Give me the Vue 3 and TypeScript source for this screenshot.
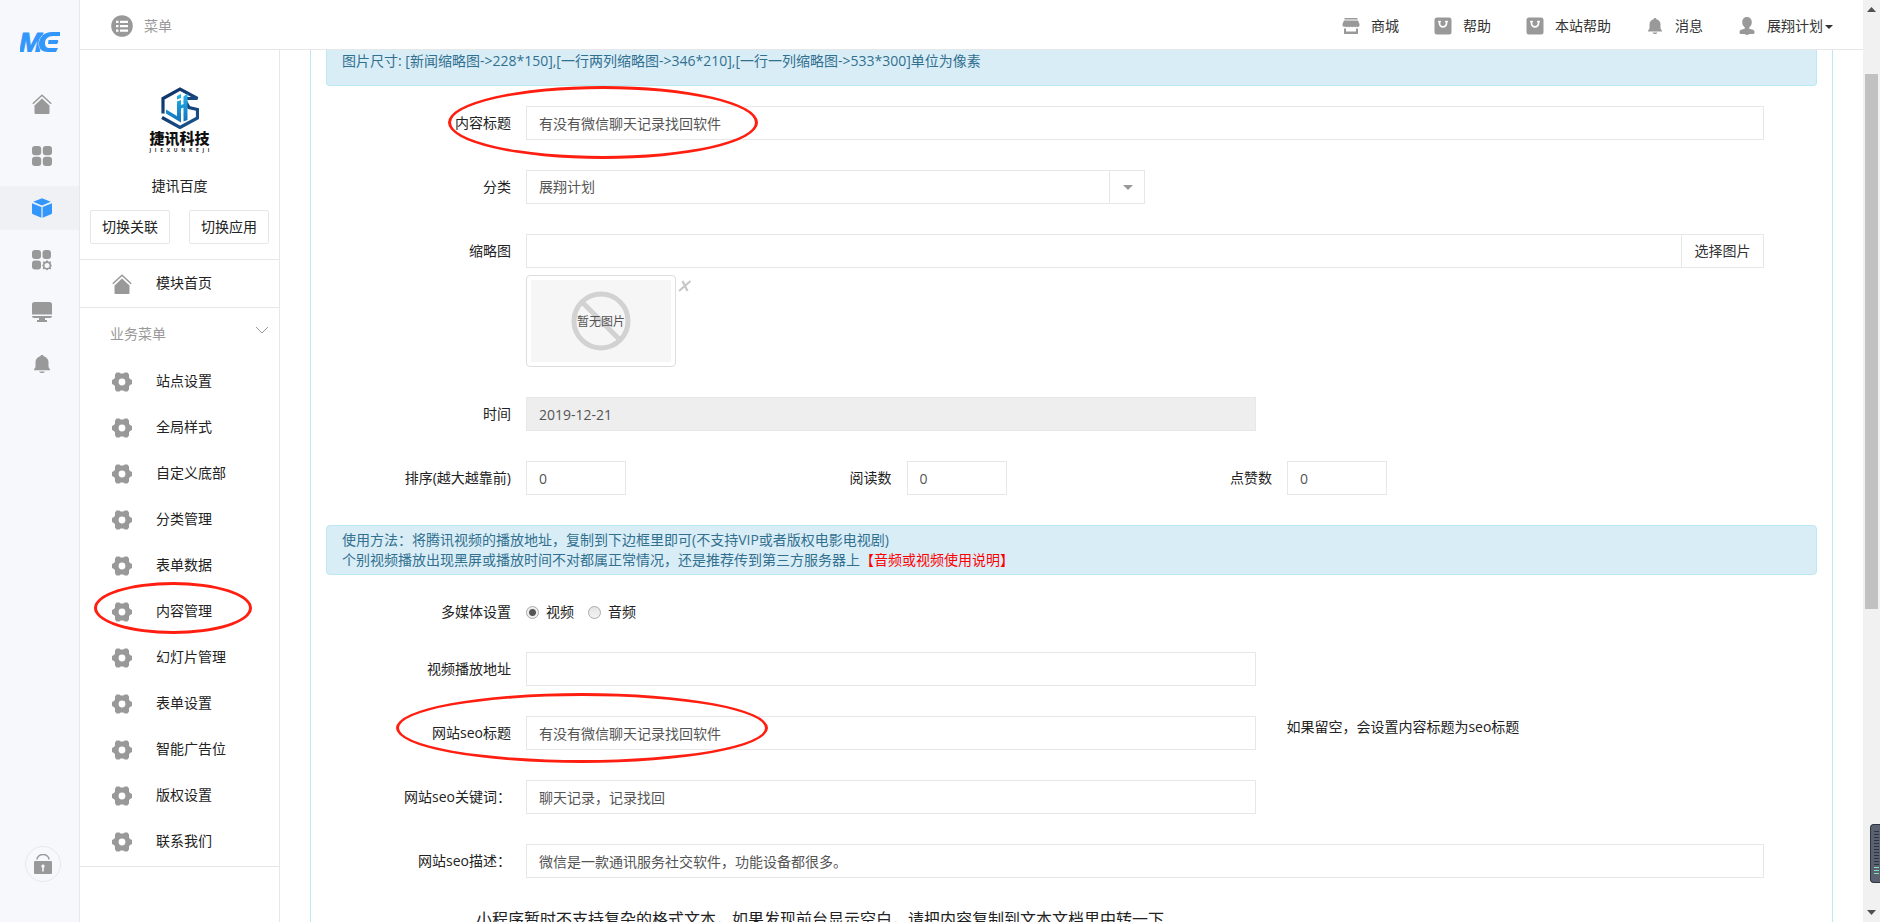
<script setup lang="ts">
import { ref } from 'vue'

interface TopLink { label: string; icon: 'shop' | 'bag' | 'bell' | 'user'; caret?: boolean }
interface MenuItem { label: string; marked?: boolean }

const railIcons = ['home', 'grid', 'cube', 'apps', 'monitor', 'bell']
const railNames: Record<string, string> = {
  home: '首页', grid: '应用', cube: '模块', apps: '管理', monitor: '系统', bell: '通知',
}
const topLinks: TopLink[] = [
  { label: '商城', icon: 'shop' },
  { label: '帮助', icon: 'bag' },
  { label: '本站帮助', icon: 'bag' },
  { label: '消息', icon: 'bell' },
  { label: '展翔计划', icon: 'user', caret: true },
]
const menu: MenuItem[] = [
  { label: '站点设置' },
  { label: '全局样式' },
  { label: '自定义底部' },
  { label: '分类管理' },
  { label: '表单数据' },
  { label: '内容管理', marked: true },
  { label: '幻灯片管理' },
  { label: '表单设置' },
  { label: '智能广告位' },
  { label: '版权设置' },
  { label: '联系我们' },
]
const brandLetters = 'JIEXUNKEJI'.split('')

const title = ref('有没有微信聊天记录找回软件')
const category = ref('展翔计划')
const thumb = ref('')
const date = ref('2019-12-21')
const order = ref('0')
const reads = ref('0')
const likes = ref('0')
const media = ref('video')
const videoUrl = ref('')
const seoTitle = ref('有没有微信聊天记录找回软件')
const seoKeys = ref('聊天记录，记录找回')
const seoDesc = ref('微信是一款通讯服务社交软件，功能设备都很多。')
</script>

<template>
  <div class="app">
    <nav class="rail">
      <svg class="mark" viewBox="0 0 40 20">
        <text x="-1" y="20" class="mark-m">M</text>
        <path class="mark-gap" d="M40 0H32C24 0 19 5 19 12c0 5 3 8 9 8h8l2-4h-8c-4 0-5-2-5-5 0-4 3-7 8-7h7z" />
        <path d="M28.500 8h9.500q1 2-1 4h-9z" />
      </svg>
      <button v-for="name in railIcons" :key="name" class="rail-btn" :class="{ active: name === 'cube' }" :aria-label="railNames[name]">
        <svg v-if="name === 'home'" viewBox="0 0 20 20"><path class="line" d="M.8 9.800 10 1.200l9.200 8.600" /><path d="M10 4.600 17.500 11.500V19a1 1 0 0 1-1 1h-13a1 1 0 0 1-1-1v-7.500z" /></svg>
        <svg v-else-if="name === 'grid'" viewBox="0 0 20 20"><rect width="9.200" height="9.200" rx="3" /><rect x="10.800" width="9.200" height="9.200" rx="3" /><rect y="10.800" width="9.200" height="9.200" rx="3" /><rect x="10.800" y="10.800" width="9.200" height="9.200" rx="3" /></svg>
        <svg v-else-if="name === 'cube'" viewBox="0 0 20 20"><path d="M10 .2 18.800 3.700 10 7.400 1.200 3.700zM0 5.200l9.400 3.900V19.800L1 16.300Q0 15.900 0 14.800zM20 5.200l-9.400 3.900V19.800l8.400-3.500q1-.4 1-1.500z" /></svg>
        <svg v-else-if="name === 'apps'" viewBox="0 0 20 20"><rect width="9" height="9" rx="3" /><rect x="10.500" width="8.500" height="9" rx="3" /><rect y="10.500" width="9" height="9" rx="3" /><path fill-rule="evenodd" d="M15 10l1.600 1.800 2.600-.2-.5 2.300 1.300 1.500-1.300 1.500.5 2.300-2.600-.2L15 20.500l-1.600-1.500-2.600.2.500-2.300L10 15.400l1.300-1.500-.5-2.300 2.600.2zM15 12.900a2.500 2.500 0 1 0 0 5 2.500 2.500 0 0 0 0-5z" /></svg>
        <svg v-else-if="name === 'monitor'" viewBox="0 0 20 20"><path d="M2.500 0h15A2.500 2.500 0 0 1 20 2.500V12.600H0V2.500A2.500 2.500 0 0 1 2.500 0zM0 14h20a2 2 0 0 1-2 2H13v2h2v2H5v-2h2v-2H2a2 2 0 0 1-2-2z" /></svg>
        <svg v-else viewBox="0 0 20 20"><path d="M10 1c.9 0 1.500.5 1.700 1.300C14.500 3 16.500 5.400 16.500 8v5L18 15.500v.8H2v-.8L3.500 13V8c0-2.600 2-5 4.800-5.700C8.500 1.500 9.100 1 10 1zM7 17.500h6q-.8 1.500-3 1.500t-3-1.500z" /></svg>
      </button>
      <button class="lock" aria-label="锁定">
        <svg viewBox="0 0 18 20"><path class="line" d="M3 5.500a6 5 0 0 1 12 0" /><path fill-rule="evenodd" d="M1 7h16a1 1 0 0 1 1 1V19a1 1 0 0 1-1 1H1a1 1 0 0 1-1-1V8a1 1 0 0 1 1-1zm8 3.500a1.700 1.700 0 0 0-.8 3.200V17.500h1.600v-3.800A1.700 1.700 0 0 0 9 10.500z" /></svg>
      </button>
    </nav>

    <div class="body">
      <header class="top">
        <button class="menu-toggle">
          <svg viewBox="0 0 22 22"><circle cx="11" cy="11" r="10.800" /><path fill="none" stroke="#fff" stroke-width="2.200" d="M5 6.800h2.500M9 6.800h8M5 11.200h2.500M9 11.200h8M5 15.600h2.500M9 15.600h8" /></svg>
          菜单
        </button>
        <ul class="top-links">
          <li v-for="link in topLinks" :key="link.label">
            <a href="#">
              <svg v-if="link.icon === 'shop'" viewBox="0 0 18 18"><path d="M2.500 1h13v1.500h-13zM2 3.500h14l1.500 3.500v1.500a2 2 0 0 1-3 1 2 2 0 0 1-2.800 0 2 2 0 0 1-2.800 0 2 2 0 0 1-2.800 0 2 2 0 0 1-2.800 0 2 2 0 0 1-2.800-1V7zM2 11.500h2v3h10v-3h2V17H2z" /></svg>
              <svg v-else-if="link.icon === 'bag'" viewBox="0 0 18 18"><rect x=".5" y=".5" width="17" height="17" rx="2.500" /><path fill="none" stroke="#fff" stroke-width="1.700" stroke-linecap="round" d="M5.500 4.800v1.500a3.500 3.500 0 0 0 7 0V4.800M4.800 4.500h1.400M11.800 4.500h1.400" /></svg>
              <svg v-else-if="link.icon === 'bell'" viewBox="0 0 18 18"><path d="M9 1c.8 0 1.300.5 1.500 1.200C13.200 2.800 14.500 5 14.500 7.500v4l1.500 2.200v.8H2v-.8l1.500-2.200v-4C3.500 5 4.800 2.800 7.500 2.200 7.700 1.500 8.200 1 9 1zM6.500 15.500h5Q11 17 9 17t-2.500-1.500z" /></svg>
              <svg v-else viewBox="0 0 18 18"><path d="M9 0c3 0 4.800 2 4.800 5 0 2.300-1 4.300-2.500 5.300v1.400l3.700 1c1 .5 1.500 1.500 1.500 2.500 0 1-.5 1.800-1.500 1.800h-3L9 18l-3-1H3c-1 0-1.500-.8-1.500-1.800 0-1 .5-2 1.500-2.500l3.700-1v-1.400C5.200 9.300 4.200 7.300 4.200 5c0-3 1.800-5 4.800-5z" /></svg>
              <span>{{ link.label }}<i v-if="link.caret" class="caret" /></span>
            </a>
          </li>
        </ul>
      </header>

      <div class="content">
        <aside class="side">
          <section class="brand">
            <svg class="hex" viewBox="0 0 38 42">
              <defs>
                <linearGradient id="hexEdge" x1="0" y1="0" x2="1" y2="1"><stop offset="0" stop-color="#0d2f62" /><stop offset="1" stop-color="#1b5590" /></linearGradient>
                <linearGradient id="hexCore" x1="0" y1="0" x2="0" y2="1"><stop offset="0" stop-color="#22b4ea" /><stop offset="1" stop-color="#1270b8" /></linearGradient>
              </defs>
              <path fill="none" stroke="url(#hexEdge)" stroke-width="3.200" d="M2 26.500V11.500L19 2l17.500 9.500H24" />
              <path fill="none" stroke="url(#hexEdge)" stroke-width="3.200" d="M24 13.500l4 7 8.500 2V31L19 40.500 1 30.500" />
              <path fill="url(#hexCore)" d="M16 14.500l4-1.500v22.500L5 26.500v-4l11 6.500zM22.500 9.500l4-3V33l-4 1.500zM16 9l4-2v4l-4 1.500zM20 18l2.500-1v3.500L20 21.500z" />
            </svg>
            <strong>捷讯科技</strong>
            <div class="latin"><span v-for="(c, i) in brandLetters" :key="i">{{ c }}</span></div>
            <p>捷讯百度</p>
            <div class="switches">
              <button>切换关联</button>
              <button>切换应用</button>
            </div>
          </section>
          <a href="#" class="item first">
            <svg viewBox="0 0 20 20"><path class="line" d="M.8 9.800 10 1.200l9.200 8.600" /><path d="M10 4.600 17.500 11.500V19a1 1 0 0 1-1 1h-13a1 1 0 0 1-1-1v-7.500z" /></svg>
            <span>模块首页</span>
          </a>
          <button class="group">
            业务菜单
            <svg viewBox="0 0 14 8"><path fill="none" stroke="#999" d="M1 1l6 6 6-6" /></svg>
          </button>
          <ul class="menu">
            <li v-for="m in menu" :key="m.label">
              <a href="#" class="item">
                <svg viewBox="0 0 20 20"><path fill-rule="evenodd" d="M4.500.5H7.500L8.500 1.500h3l1-1h3L17 2.500V5.500L18 7l2 1v4l-2 1-1 1.500v3l-1.500 2h-3l-1-1h-3l-1 1H4.500L3 17.500v-3L2 13 0 12V8l2-1 1-1.500v-3zM10 6.600a3.400 3.400 0 1 0 0 6.800 3.400 3.400 0 0 0 0-6.800z" /></svg>
                <span>{{ m.label }}</span>
              </a>
              <i v-if="m.marked" class="ring ring-menu" />
            </li>
          </ul>
        </aside>

        <main class="main">
          <form class="panel" @submit.prevent>
            <div class="alert clipped">图片尺寸: [新闻缩略图-&gt;228*150],[一行两列缩略图-&gt;346*210],[一行一列缩略图-&gt;533*300]单位为像素</div>

            <div class="row">
              <label for="title">内容标题</label>
              <div class="field"><input id="title" v-model="title" type="text"></div>
              <i class="ring ring-title" />
            </div>
            <div class="row">
              <label for="category">分类</label>
              <div class="field">
                <div class="select">
                  <select id="category" v-model="category"><option>展翔计划</option></select>
                  <i class="arrow" />
                </div>
              </div>
            </div>
            <div class="row">
              <label for="thumb">缩略图</label>
              <div class="field">
                <div class="upload">
                  <input id="thumb" v-model="thumb" type="text">
                  <button type="button">选择图片</button>
                </div>
                <div class="preview">
                  <div class="frame">
                    <svg viewBox="0 0 140 82">
                      <rect width="140" height="82" fill="#f6f6f6" />
                      <circle cx="70" cy="41" r="27" fill="none" stroke="#d2d2d2" stroke-width="5" />
                      <path d="M51 22l38 38" stroke="#d2d2d2" stroke-width="5" />
                      <text x="70" y="46" text-anchor="middle">暂无图片</text>
                    </svg>
                  </div>
                  <button type="button" class="remove" aria-label="删除"><svg viewBox="0 0 14 12"><path fill="none" stroke="#c8c8c8" stroke-width="2.200" d="M1 11 12.500 1M4.500 1l5 10" /></svg></button>
                </div>
              </div>
            </div>
            <div class="row">
              <label for="date">时间</label>
              <div class="field"><input id="date" v-model="date" class="medium" type="text" readonly></div>
            </div>
            <div class="row">
              <label for="order">排序(越大越靠前)</label>
              <div class="field">
                <div class="numbers">
                  <input id="order" v-model="order" type="text">
                  <label for="reads">阅读数</label>
                  <input id="reads" v-model="reads" type="text">
                  <label for="likes">点赞数</label>
                  <input id="likes" v-model="likes" type="text">
                </div>
              </div>
            </div>

            <div class="alert usage">
              使用方法：将腾讯视频的播放地址，复制到下边框里即可(不支持VIP或者版权电影电视剧)<br>
              个别视频播放出现黑屏或播放时间不对都属正常情况，还是推荐传到第三方服务器上<a href="#">【音频或视频使用说明】</a>
            </div>

            <div class="row radios" role="radiogroup" aria-labelledby="mediaLabel">
              <span id="mediaLabel" class="label">多媒体设置</span>
              <div class="field">
                <label class="radio"><input v-model="media" type="radio" name="media" value="video">视频</label>
                <label class="radio"><input v-model="media" type="radio" name="media" value="audio">音频</label>
              </div>
            </div>
            <div class="row">
              <label for="video">视频播放地址</label>
              <div class="field"><input id="video" v-model="videoUrl" class="medium" type="text"></div>
            </div>
            <div class="row">
              <label for="seoTitle">网站seo标题</label>
              <div class="field hinted">
                <input id="seoTitle" v-model="seoTitle" class="medium" type="text">
                <span>如果留空，会设置内容标题为seo标题</span>
              </div>
              <i class="ring ring-seo" />
            </div>
            <div class="row">
              <label for="seoKeys">网站seo关键词：</label>
              <div class="field"><input id="seoKeys" v-model="seoKeys" class="medium" type="text"></div>
            </div>
            <div class="row">
              <label for="seoDesc">网站seo描述：</label>
              <div class="field"><input id="seoDesc" v-model="seoDesc" type="text"></div>
            </div>
            <p class="note">小程序暂时不支持复杂的格式文本，如果发现前台显示空白，请把内容复制到文本文档里中转一下</p>
          </form>
        </main>
      </div>
    </div>

    <div class="scroll">
      <svg viewBox="0 0 9 5"><path d="M4.500 0 9 5H0z" /></svg>
      <div class="track"><div class="thumb" /></div>
      <svg viewBox="0 0 9 5"><path d="M0 0h9L4.500 5z" /></svg>
    </div>
    <div class="meter"><i v-for="n in 15" :key="n" :class="{ on: n > 12 }" /></div>
  </div>
</template>

<style>
body {
  margin: 0;
  overflow: hidden;
}
</style>

<style scoped>
* {
  box-sizing: border-box;
}
.app {
  position: relative;
  display: flex;
  height: 100vh;
  overflow: hidden;
  background: #fff;
  color: #222;
  font: 14px/20px "Open Sans", "Noto Sans CJK SC", sans-serif;
}
button,
input,
select {
  font: inherit;
  color: inherit;
  margin: 0;
  padding: 0;
  border: 0;
  background: none;
  border-radius: 0;
  outline: 0;
}
a {
  color: inherit;
  text-decoration: none;
}
ul,
p {
  margin: 0;
  padding: 0;
  list-style: none;
}
svg {
  display: block;
  flex: none;
  fill: #999;
}
.line {
  fill: none;
  stroke: #999;
  stroke-width: 1.5;
}

.rail {
  flex: none;
  width: 80px;
  display: flex;
  flex-direction: column;
  align-items: center;
  gap: 8px;
  padding: 32px 0 40px;
  background: #f6f8fb;
  border-right: 1px solid #e7e8ea;
}
.mark {
  width: 40px;
  height: 20px;
  margin-bottom: 22px;
  fill: #3296fa;
}
.mark-m {
  font: italic bold 28px "Liberation Sans", sans-serif;
  stroke: #3296fa;
}
.mark-gap {
  stroke: #f6f8fb;
  paint-order: stroke;
}
.rail-btn {
  align-self: stretch;
  height: 44px;
  display: flex;
  align-items: center;
  padding-left: 32px;
}
.rail-btn svg {
  width: 20px;
  height: 20px;
  overflow: visible;
}
.rail-btn.active {
  background: #eff1f5;
}
.active svg {
  fill: #3296fa;
}
.lock {
  width: 36px;
  height: 36px;
  margin: auto 0 0 6px;
  display: flex;
  align-items: center;
  justify-content: center;
  border: 1px solid #e7e8ea;
  border-radius: 50%;
}
.lock svg {
  width: 18px;
  height: 20px;
}

.body {
  flex: 1;
  min-width: 0;
  display: flex;
  flex-direction: column;
}
.top {
  flex: none;
  height: 50px;
  display: flex;
  justify-content: space-between;
  padding: 0 30px 0 31px;
  border-bottom: 1px solid #e7e7e7;
}
.menu-toggle {
  display: flex;
  align-items: center;
  gap: 11px;
  color: #999;
  padding-top: 3px;
}
.menu-toggle svg {
  width: 22px;
  height: 22px;
}
.top-links {
  display: flex;
  align-items: center;
  gap: 35px;
  padding-top: 3px;
}
.top-links a {
  display: flex;
  align-items: center;
  gap: 11px;
  color: #333;
}
.top-links svg {
  width: 18px;
  height: 18px;
}
.caret {
  display: inline-block;
  margin-left: 2px;
  vertical-align: middle;
  border: 4px solid transparent;
  border-top-color: #333;
  border-bottom: 0;
}

.content {
  flex: 1;
  min-height: 0;
  display: flex;
}
.side {
  flex: none;
  width: 200px;
  border-right: 1px solid #e7e7e7;
}
.brand {
  display: flex;
  flex-direction: column;
  align-items: center;
  padding: 37px 10px 15px;
  border-bottom: 1px solid #e7e7e7;
}
.hex {
  width: 38px;
  height: 42px;
}
.brand strong {
  margin-top: 1px;
  font-size: 15px;
  line-height: 16px;
  font-weight: 900;
  color: #111;
}
.latin {
  width: 60px;
  display: flex;
  justify-content: space-between;
  margin-top: 2px;
  font-size: 5px;
  line-height: 5px;
  font-weight: bold;
}
.brand p {
  margin: 23px 0 14px;
}
.switches {
  align-self: stretch;
  display: flex;
  justify-content: space-between;
}
.switches button {
  width: 80px;
  height: 34px;
  border: 1px solid #e7e7e7;
  border-radius: 2px;
}
.item {
  display: flex;
  align-items: center;
  gap: 24px;
  height: 46px;
  padding-left: 32px;
}
.item svg {
  width: 20px;
  height: 20px;
}
.item span {
  padding-bottom: 2px;
}
.item.first {
  height: 48px;
  border-bottom: 1px solid #e7e7e7;
}
.group {
  width: 100%;
  height: 51px;
  display: flex;
  align-items: center;
  justify-content: space-between;
  padding: 0 10px 0 30px;
  color: #999;
}
.group svg {
  width: 14px;
  height: 8px;
  margin-bottom: 8px;
}
.menu {
  padding-bottom: 1px;
  border-bottom: 1px solid #e7e7e7;
}
.menu li,
.row {
  position: relative;
}

.main {
  flex: 1;
  min-width: 0;
  padding: 0 30px;
}
.panel {
  min-height: 100%;
  padding: 0 15px;
  border: solid #bce8f1;
  border-width: 0 1px;
}
.alert {
  padding: 4px 15px;
  border: 1px solid #bce8f1;
  border-radius: 4px;
  background: #d9edf7;
  color: #31708f;
}
.alert a {
  color: #f00;
}
.clipped {
  padding: 1px 15px 14px;
  margin-bottom: 20px;
  border-top: 0;
  border-radius: 0 0 4px 4px;
}
.usage {
  margin-bottom: 20px;
}
.row {
  display: flex;
  margin-bottom: 30px;
}
.row > label,
.row > .label {
  flex: none;
  width: 200px;
  padding-right: 15px;
  line-height: 34px;
  text-align: right;
}
.field {
  flex: 1;
  min-width: 0;
  margin-right: 53px;
}
input[type="text"] {
  display: block;
  width: 100%;
  height: 34px;
  padding: 0 12px;
  border: 1px solid #e7e7e7;
  background: #fff;
  color: #555;
}
input.medium {
  width: 59%;
}
input[readonly] {
  background: #eee;
}
.select {
  position: relative;
  width: 50%;
}
.select select {
  appearance: none;
  display: block;
  width: 100%;
  height: 34px;
  padding: 0 12px;
  border: 1px solid #e7e7e7;
  color: #555;
}
.arrow {
  position: absolute;
  top: 0;
  right: 0;
  width: 36px;
  height: 34px;
  display: grid;
  place-items: center;
  border-left: 1px solid #e7e7e7;
  pointer-events: none;
}
.arrow::after {
  content: "";
  border: 5px solid transparent;
  border-top-color: #999;
  border-bottom: 0;
}
.upload {
  display: flex;
}
.upload button {
  flex: none;
  width: 82px;
  border: 1px solid #e7e7e7;
  border-left: 0;
  color: #333;
}
.preview {
  display: flex;
  align-items: flex-start;
  gap: 2px;
  margin-top: 7px;
}
.frame {
  padding: 4px;
  border: 1px solid #ddd;
  border-radius: 4px;
}
.frame svg {
  width: 140px;
  height: 82px;
}
.frame text {
  font-size: 12px;
  fill: #555;
}
.remove {
  margin-top: 5px;
}
.remove svg {
  width: 14px;
  height: 12px;
}
.numbers {
  width: 861px;
  max-width: 100%;
  display: grid;
  grid-template-columns: 100px 1fr 100px 1fr 100px;
}
.numbers label {
  padding-right: 15px;
  line-height: 34px;
  text-align: right;
}
.radios {
  margin-bottom: 23px;
}
.radios .field {
  display: flex;
  gap: 14px;
}
.radio {
  display: flex;
  align-items: center;
  gap: 7px;
}
.radio input {
  appearance: none;
  width: 13px;
  height: 13px;
  border: 1px solid #aaa;
  border-radius: 50%;
  background: linear-gradient(#e4e4e4, #f4f4f4);
}
.radio input:checked {
  background: radial-gradient(circle, #555 0 3px, #eee 4px);
}
.hinted {
  display: flex;
}
.hinted input {
  flex: none;
}
.hinted span {
  padding-left: 30px;
  line-height: 22px;
  white-space: nowrap;
}
.note {
  padding-left: 150px;
  font-size: 16px;
  line-height: 22px;
}

.ring {
  position: absolute;
  z-index: 2;
  border: 3px solid #ff1e10;
  border-radius: 50%;
  pointer-events: none;
}
.ring-menu {
  left: 14px;
  top: -7px;
  width: 158px;
  height: 52px;
}
.ring-title {
  left: 122px;
  top: -20px;
  width: 310px;
  height: 73px;
}
.ring-seo {
  left: 70px;
  top: -23px;
  width: 372px;
  height: 70px;
}

.scroll {
  flex: none;
  width: 17px;
  display: flex;
  flex-direction: column;
  align-items: center;
  padding: 7px 0;
  background: #f1f1f1;
}
.scroll svg {
  width: 9px;
  height: 5px;
  fill: #505050;
}
.track {
  flex: 1;
  width: 13px;
  padding-top: 62px;
}
.thumb {
  height: 64%;
  background: #c1c1c1;
}
.meter {
  position: absolute;
  right: 0;
  bottom: 39px;
  width: 10px;
  height: 59px;
  padding: 6px 1px 0 3px;
  border: 1px solid #2f333d;
  border-right: 0;
  border-radius: 4px 0 0 4px;
  background: #5a6272;
}
.meter i {
  display: block;
  height: 1px;
  margin-bottom: 2px;
  background: #2f333d;
}
.meter i.on {
  background: #7fe0b8;
}
</style>
